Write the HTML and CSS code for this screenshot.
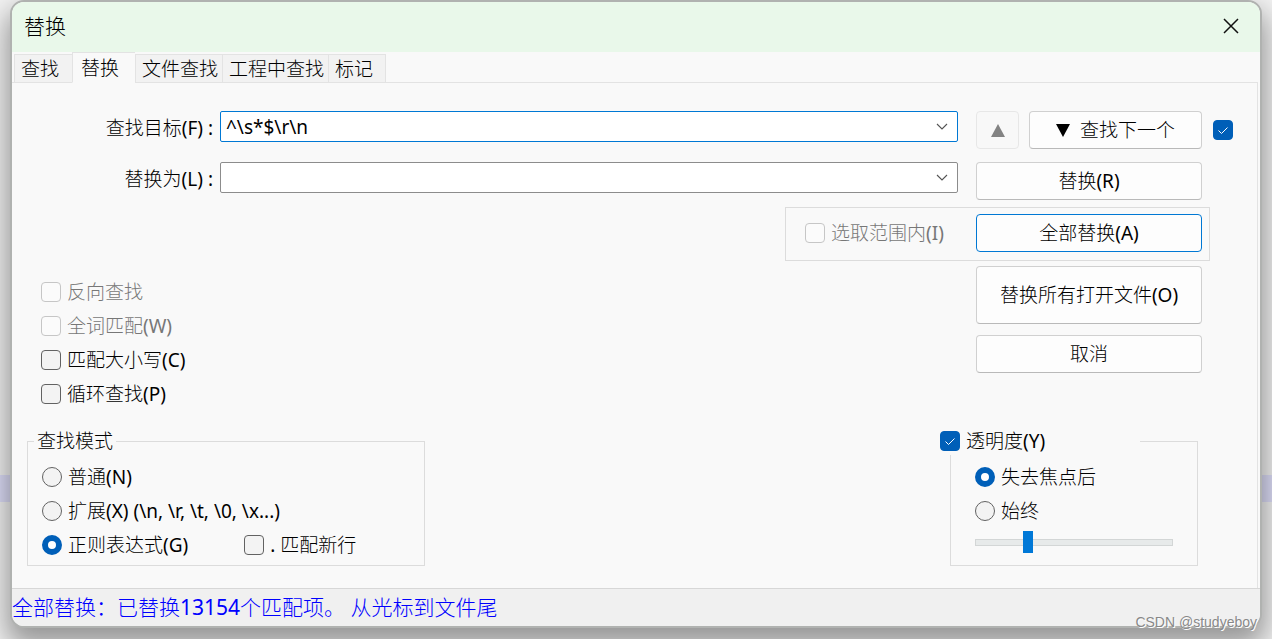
FILE: index.html
```html
<!DOCTYPE html>
<html lang="zh-CN">
<head>
<meta charset="utf-8">
<title>替换</title>
<link rel="stylesheet" href="styles.css">
</head>
<body>
<main class="dialog">
  <header class="titlebar">
    <h1 class="title">替换</h1>
    <button class="close" type="button" aria-label="关闭"><svg width="16" height="16" viewBox="0 0 16 16"><path d="M1 1L15 15M15 1L1 15" fill="none" stroke="#111" stroke-width="1.5"/></svg></button>
  </header>
  <nav class="tabs">
    <button class="tab" type="button">查找</button>
    <button class="tab tab-active" type="button">替换</button>
    <button class="tab" type="button">文件查找</button>
    <button class="tab" type="button">工程中查找</button>
    <button class="tab" type="button">标记</button>
  </nav>
  <form class="panel">
    <div class="fields">
      <label class="field-label" for="find">查找目标(F) :</label>
      <div class="combo combo-focus">
        <input id="find" class="combo-input" type="text" value="^\s*$\r\n">
        <button class="combo-arrow" type="button" aria-label="查找历史"><svg width="12" height="8" viewBox="0 0 12 8"><path d="M1 1L6 6L11 1" fill="none" stroke="#555" stroke-width="1.1"/></svg></button>
      </div>
      <div class="find-buttons">
        <button class="btn btn-up" type="button" disabled aria-label="查找上一个"><svg width="14" height="13" viewBox="0 0 14 13"><path d="M7 0L14 13H0Z" fill="#838383"/></svg></button>
        <button class="btn btn-next" type="button"><svg width="14" height="13" viewBox="0 0 14 13"><path d="M0 0H14L7 13Z" fill="#000"/></svg>查找下一个</button>
      </div>
      <input class="check check-side" type="checkbox" checked aria-label="双向查找按钮">
      <label class="field-label" for="replace">替换为(L) :</label>
      <div class="combo">
        <input id="replace" class="combo-input" type="text" value="">
        <button class="combo-arrow" type="button" aria-label="替换历史"><svg width="12" height="8" viewBox="0 0 12 8"><path d="M1 1L6 6L11 1" fill="none" stroke="#555" stroke-width="1.1"/></svg></button>
      </div>
      <button class="btn" type="button">替换(R)</button>
    </div>
    <div class="scope">
      <label class="option option-off"><input class="check" type="checkbox" disabled>选取范围内(I)</label>
      <button class="btn btn-default" type="button">全部替换(A)</button>
    </div>
    <div class="middle">
      <div class="options">
        <label class="option option-off"><input class="check" type="checkbox" disabled>反向查找</label>
        <label class="option option-off"><input class="check" type="checkbox" disabled>全词匹配(W)</label>
        <label class="option"><input class="check" type="checkbox">匹配大小写(C)</label>
        <label class="option"><input class="check" type="checkbox">循环查找(P)</label>
      </div>
      <div class="actions">
        <button class="btn btn-tall" type="button">替换所有打开文件(O)</button>
        <button class="btn" type="button">取消</button>
      </div>
    </div>
    <div class="groups">
      <fieldset class="group group-mode">
        <legend class="legend">查找模式</legend>
        <div class="group-body">
          <label class="option"><input class="radio" type="radio" name="mode">普通(N)</label>
          <label class="option"><input class="radio" type="radio" name="mode">扩展(X) (\n, \r, \t, \0, \x...)</label>
          <div class="pair">
            <label class="option"><input class="radio" type="radio" name="mode" checked>正则表达式(G)</label>
            <label class="option"><input class="check" type="checkbox">. 匹配新行</label>
          </div>
        </div>
      </fieldset>
      <fieldset class="group group-opacity">
        <legend class="legend legend-check"><label class="option"><input class="check" type="checkbox" checked>透明度(Y)</label></legend>
        <div class="group-body">
          <label class="option"><input class="radio" type="radio" name="opacity" checked>失去焦点后</label>
          <label class="option"><input class="radio" type="radio" name="opacity">始终</label>
          <input class="slider" type="range" min="0" max="100" value="25" aria-label="透明度">
        </div>
      </fieldset>
    </div>
  </form>
  <footer class="status">全部替换：已替换13154个匹配项。 从光标到文件尾</footer>
</main>
<div class="watermark">CSDN @studyeboy</div>
</body>
</html>
```
FILE: styles.css
```css
* {
  box-sizing: border-box;
}

body {
  position: relative;
  margin: 0;
  padding: 0 10px 10px;
  min-height: 100vh;
  overflow: hidden;
  background: linear-gradient(#f2f2f2 475px, #dedef8 475px, #dedef8 502px, #f2f2f2 502px);
  color: #000;
  font: 19px/28px "Noto Sans", "Noto Sans CJK SC Light", "Noto Sans CJK SC", sans-serif;
}

button,
input {
  margin: 0;
  font: inherit;
  color: inherit;
}

.dialog {
  border: 2px solid #b0b2b0;
  border-radius: 14px;
  overflow: hidden;
  background: #f9f9f9;
  box-shadow: 0 14px 28px 4px rgba(0, 0, 0, 0.38);
}

.titlebar {
  display: flex;
  align-items: center;
  justify-content: space-between;
  height: 50px;
  padding: 0 17px 2px 12px;
  background: #e9f8ea;
}

.title {
  margin: 0;
  font-size: 21px;
  font-weight: 400;
}

.close {
  display: flex;
  padding: 4px;
  border: 0;
  background: none;
}

.tabs {
  display: flex;
  align-items: flex-end;
  height: 31px;
  padding-left: 2px;
  position: relative;
}

.tab {
  height: 29px;
  min-width: 58px;
  padding: 0 4px 0 6px;
  border: 1px solid #e3e3e3;
  border-right-width: 0;
  background: #f2f2f2;
  line-height: 28px;
  text-align: left;
}

.tab:last-child {
  border-right-width: 1px;
}

.tab-active {
  height: 31px;
  min-width: 63px;
  padding-left: 8px;
  border-bottom-color: #f9f9f9;
  background: #f9f9f9;
}

.panel {
  margin: -1px 2px 0 0;
  padding: 28px 24px 22px 14px;
  border: solid #e3e3e3;
  border-width: 1px 1px 0 0;
}

.fields {
  display: grid;
  grid-template-columns: 190px 1fr 226px 31px;
  row-gap: 13px;
}

.field-label {
  height: 38px;
  padding-right: 3px;
  line-height: 34px;
  text-align: right;
}

.combo {
  display: flex;
  height: 31px;
  margin: 0 18px 0 4px;
  border: 1px solid #8c8c8c;
  border-radius: 2px;
  background: #fff;
}

.combo-focus {
  border-color: #0078d4;
}

.combo-input {
  flex: 1;
  min-width: 0;
  padding: 0 5px;
  border: 0;
  outline: 0;
  background: none;
}

.combo-arrow {
  display: flex;
  align-items: center;
  justify-content: center;
  width: 30px;
  padding: 0;
  border: 0;
  background: none;
}

.find-buttons {
  display: flex;
  gap: 10px;
}

.btn {
  display: flex;
  align-items: center;
  justify-content: center;
  gap: 10px;
  width: 226px;
  height: 38px;
  padding: 0;
  border: 1px solid #d0d0d0;
  border-bottom-color: #b9b9b9;
  border-radius: 4px;
  background: #fdfdfd;
}

.btn-up {
  width: 43px;
  border-color: #e7e7e7;
  background: #f8f8f8;
}

.btn-next {
  flex: 1;
}

.btn-default {
  border-color: #0078d4;
}

.btn-tall {
  height: 58px;
}

.check,
.radio {
  appearance: none;
  flex: none;
  width: 20px;
  height: 20px;
  border: 1px solid #626262;
  border-radius: 4px;
  background: #f3f3f3;
}

.radio {
  border-radius: 50%;
}

.check:disabled {
  border-color: #c6c6c6;
  background: #fbfbfb;
}

.check:checked {
  border-color: #005fb8;
  background: #005fb8 url("data:image/svg+xml,%3Csvg xmlns='http://www.w3.org/2000/svg' viewBox='0 0 18 18'%3E%3Cpath d='M4.5 9.5L7.5 12.5L13.5 6.5' fill='none' stroke='white' stroke-width='1'/%3E%3C/svg%3E") center / 18px no-repeat;
}

.radio:checked {
  border: 6px solid #005fb8;
  background: #fff;
}

.check-side {
  align-self: center;
  justify-self: end;
}

.option {
  display: flex;
  align-items: center;
  gap: 6px;
  height: 28px;
  white-space: nowrap;
}

.option-off {
  color: #777;
}

.scope {
  display: flex;
  align-items: center;
  justify-content: space-between;
  width: 425px;
  margin: 7px 23px 0 auto;
  padding: 6px 7px 8px 19px;
  border: 1px solid #dcdcdc;
}

.middle,
.groups {
  display: flex;
  justify-content: space-between;
}

.middle {
  align-items: flex-start;
  margin-top: 5px;
  padding: 0 31px 0 15px;
}

.options {
  display: grid;
  gap: 6px;
  padding-top: 12px;
}

.actions {
  display: grid;
  gap: 11px;
}

.groups {
  margin-top: 19px;
  padding: 0 35px 0 1px;
}

.group {
  margin: 0;
  padding: 0;
  border: 1px solid #dcdcdc;
}

.group-mode {
  width: 398px;
}

.group-opacity {
  width: 248px;
}

.legend {
  height: 28px;
  margin-left: 6px;
  padding: 0 3px;
}

.legend-check {
  width: 200px;
  margin-left: -11px;
  padding: 0;
  background: #f9f9f9;
}

.group-body {
  display: grid;
  gap: 6px;
  padding: 8px 24px 6px 14px;
}

.group-opacity .group-body {
  padding-left: 24px;
}

.pair {
  display: flex;
  gap: 56px;
}

.slider {
  appearance: none;
  width: 100%;
  height: 22px;
  background: none;
}

.slider::-webkit-slider-runnable-track {
  height: 7px;
  border: 1px solid #d3d6d6;
  background: #e7eaea;
}

.slider::-webkit-slider-thumb {
  appearance: none;
  width: 10px;
  height: 22px;
  margin-top: -9px;
  background: #0078d7;
}

.status {
  height: 38px;
  border-top: 1px solid #d7d7d7;
  background: #f0f0f0;
  color: #00f;
  font-size: 21px;
  line-height: 37px;
}

.watermark {
  position: absolute;
  right: 15px;
  bottom: 8px;
  color: #888;
  font: 14px/18px "Liberation Sans", sans-serif;
  text-shadow: 1px 1px 0 #fff;
}
```
